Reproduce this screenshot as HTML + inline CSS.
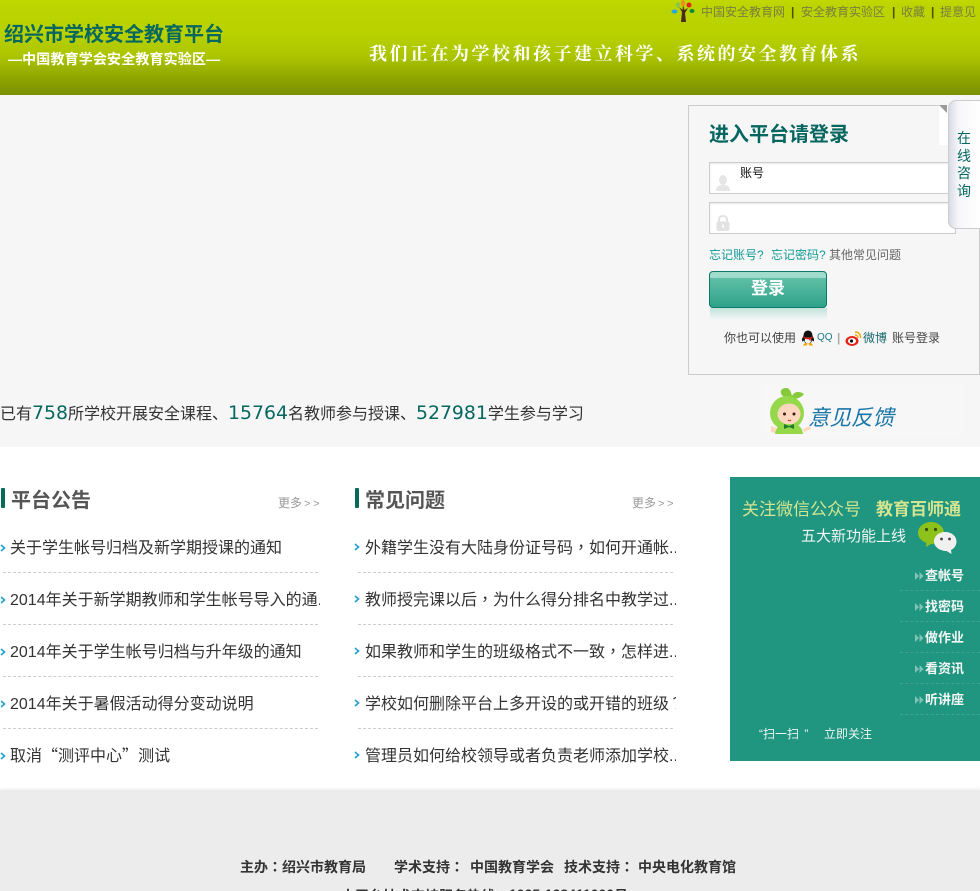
<!DOCTYPE html>
<html lang="zh">
<head>
<meta charset="utf-8">
<title>绍兴市学校安全教育平台</title>
<style>
html,body{margin:0;padding:0;width:980px;height:891px;overflow:hidden;background:#fff;font-family:"Liberation Sans","Noto Sans CJK SC",sans-serif;}
#w{position:relative;width:980px;height:891px;overflow:hidden;}
.a{position:absolute;white-space:nowrap;}
.hdr{position:absolute;left:0;top:0;width:980px;height:95px;background:linear-gradient(#c2d900 0,#bcd400 6%,#b9d200 35%,#abc400 60%,#8ba200 85%,#7a8f00 100%);}
.hero{position:absolute;left:0;top:95px;width:980px;height:352px;background:#f6f6f6;}
.foot{position:absolute;left:0;top:790px;width:980px;height:101px;background:#ececec;box-shadow:0 -1px 3px rgba(0,0,0,.08);}
.li{position:absolute;font-size:16px;line-height:24px;color:#333;white-space:nowrap;overflow:hidden;}
.dash{position:absolute;height:0;border-top:1px dashed #ccc;}
.arr{position:absolute;width:6px;height:8px;}
.ttl{position:absolute;font-size:20px;font-weight:bold;color:#555;line-height:28px;white-space:nowrap;}
.bar{position:absolute;width:4px;height:20px;background:#056a5e;border-radius:1px;}
.more{position:absolute;font-size:12px;color:#999;line-height:16px;white-space:nowrap;}
.more span{font-size:11px;letter-spacing:2.700px;margin-left:2px;line-height:0;}
.menu{position:absolute;left:925px;font-size:13px;font-weight:bold;color:#f2f7f5;line-height:16px;white-space:nowrap;}
.mdash{position:absolute;left:900px;width:80px;border-top:1px dashed #3fa48f;}
.p{font-family:"Noto Sans CJK TC",sans-serif;line-height:0;}
.q{font-family:"Noto Sans CJK SC",sans-serif;line-height:0;}
.n{font-family:"DejaVu Sans",sans-serif;font-size:18.850px;color:#05675f;line-height:0;}
.tl{position:absolute;top:4px;font-size:12px;line-height:16px;color:#777f40;white-space:nowrap;}
.sp{position:absolute;top:4px;font-size:12px;line-height:16px;color:#4a5000;font-weight:bold;}
.f{position:absolute;top:858px;font-size:14px;font-weight:bold;line-height:18px;color:#333;white-space:nowrap;}
</style>
</head>
<body>
<div id="w">

<div class="hdr"></div>
<div class="a" style="left:4px;top:20px;font-size:20px;font-weight:bold;color:#05675f;line-height:30px;">绍兴市学校安全教育平台</div>
<div class="a" style="left:8px;top:49px;font-size:14px;font-weight:bold;color:#fff;line-height:20px;letter-spacing:.15px;">—中国教育学会安全教育实验区—</div>
<div class="a" style="left:369px;top:41px;font-family:'Liberation Serif','Noto Serif CJK SC',serif;font-size:18px;color:#fff;font-weight:bold;line-height:26px;letter-spacing:2.5px;">我们正在为学校和孩子建立科学、系统的安全教育体系</div>

<svg class="a" style="left:670px;top:0;" width="26" height="24" viewBox="0 0 26 24">
<path d="M11 22 L12 12 L9 7 L12.5 10 L13 5 L14.5 10 L18 8 L15 13 L16 22 Z" fill="#4a2a1c"/>
<ellipse cx="4.500" cy="11.500" rx="3" ry="2" fill="#25a9e0"/>
<ellipse cx="8" cy="5" rx="2" ry="3" fill="#8bc34a"/>
<ellipse cx="13" cy="3" rx="2" ry="3" fill="#f08a24"/>
<ellipse cx="19" cy="5" rx="2.500" ry="2.500" fill="#e3241b"/>
<ellipse cx="22" cy="11" rx="2.500" ry="2" fill="#0a8a3c"/>
</svg>
<div class="tl" style="left:701px;">中国安全教育网</div>
<div class="sp" style="left:791px;">|</div>
<div class="tl" style="left:801px;">安全教育实验区</div>
<div class="sp" style="left:892px;">|</div>
<div class="tl" style="left:901px;">收藏</div>
<div class="sp" style="left:931px;">|</div>
<div class="tl" style="left:940px;">提意见</div>

<div class="hero"></div>

<!-- login box -->
<div class="a" style="left:688px;top:105px;width:290px;height:268px;border:1px solid #ccc;background:#f6f6f6;"></div>
<div class="a" style="left:709px;top:121px;font-size:20px;font-weight:bold;color:#05675f;line-height:28px;">进入平台请登录</div>

<div class="a" style="left:709px;top:162px;width:245px;height:30px;border:1px solid #ccc;background:#fff;box-shadow:inset 0 1px 2px #e8e8e8;"></div>
<svg class="a" style="left:715px;top:174px;" width="16" height="18" viewBox="0 0 16 18"><ellipse cx="8" cy="6" rx="4" ry="5" fill="#e6e6e6"/><path d="M1 17 C1 12 4 11 8 11 C12 11 15 12 15 17 Z" fill="#e6e6e6"/></svg>
<div class="a" style="left:740px;top:165px;font-size:12px;line-height:16px;color:#111;">账号</div>

<div class="a" style="left:709px;top:202px;width:245px;height:30px;border:1px solid #ccc;background:#fff;box-shadow:inset 0 1px 2px #e8e8e8;"></div>
<svg class="a" style="left:715px;top:214px;" width="16" height="18" viewBox="0 0 16 18"><path d="M4 8 V5.500 C4 3 6 2 8 2 C10 2 12 3 12 5.500 V8" fill="none" stroke="#e2e2e2" stroke-width="2"/><rect x="1.500" y="7.500" width="13" height="9.500" rx="2" fill="#e2e2e2"/><rect x="7.200" y="10.500" width="1.600" height="3.500" fill="#fff"/></svg>

<div class="a" style="left:709px;top:247px;font-size:12px;line-height:16px;color:#139a96;">忘记账号?</div>
<div class="a" style="left:771px;top:247px;font-size:12px;line-height:16px;color:#139a96;">忘记密码?</div>
<div class="a" style="left:829px;top:247px;font-size:12px;line-height:16px;color:#666;">其他常见问题</div>

<div class="a" style="left:709px;top:271px;width:116px;height:35px;border:1px solid #0b7a6a;border-radius:4px;background:linear-gradient(#9fdccb 0,#9fdccb 16%,#5fbea6 18%,#2fa28a 100%);"></div>
<div class="a" style="left:710px;top:308px;width:117px;height:12px;background:linear-gradient(#bfe3da,#f6f6f6);"></div>
<div class="a" style="left:751px;top:278px;font-size:17px;font-weight:bold;color:#fff;line-height:22px;">登录</div>

<div class="a" style="left:724px;top:330px;font-size:12px;line-height:16px;color:#444;">你也可以使用</div>
<svg class="a" style="left:800px;top:330px;" width="16" height="16" viewBox="0 0 16 16"><path d="M8 0.500 C11 0.500 12.500 3 12.500 6 C14 8 14.500 10.500 13.500 11.500 L12 10.500 C11.500 12 11 13 10 13.500 H6 C5 13 4.500 12 4 10.500 L2.500 11.500 C1.500 10.500 2 8 3.500 6 C3.500 3 5 0.500 8 0.500 Z" fill="#111"/><ellipse cx="8" cy="10.500" rx="3.300" ry="3" fill="#f4f4f4"/><path d="M3.500 6.500 Q8 9 12.500 6.500 L12.500 8 Q10 9.500 10.500 11.500 L9 9.500 Q6 9.500 3.500 8 Z" fill="#e3241b"/><path d="M2.500 15.500 L5 13 H7.500 L7 15.500 Z M13.500 15.500 L11 13 H8.500 L9 15.500 Z" fill="#f5a400"/></svg>
<div class="a" style="left:817px;top:331px;font-size:10px;line-height:14px;color:#1d7a8a;">QQ</div>
<div class="a" style="left:837px;top:330px;font-size:12px;line-height:16px;color:#aaa;font-weight:bold;">|</div>
<svg class="a" style="left:845px;top:330px;" width="17" height="17" viewBox="0 0 17 17"><ellipse cx="7" cy="11" rx="6.500" ry="5" fill="#e3241b"/><ellipse cx="7" cy="11" rx="4" ry="3" fill="#fff"/><circle cx="6.500" cy="11" r="1.600" fill="#111"/><path d="M10 2 C14 2 16 5 15.500 8 M10 5 C12 5 13 6.500 13 8" fill="none" stroke="#f5a400" stroke-width="1.400"/></svg>
<div class="a" style="left:863px;top:330px;font-size:12px;line-height:16px;color:#1a6a70;">微博</div>
<div class="a" style="left:892px;top:330px;font-size:12px;line-height:16px;color:#444;">账号登录</div>

<!-- consult tab -->
<div class="a" style="left:939px;top:105px;width:10px;height:40px;background:#fff;"></div>
<div class="a" style="left:939px;top:105px;width:0;height:0;border-top:8px solid #999;border-left:8px solid transparent;"></div>
<div class="a" style="left:948px;top:100px;width:32px;height:127px;border:1px solid #ccc;border-right:0;border-radius:8px 0 0 8px;background:linear-gradient(90deg,#d7dbe4 0,#f7f7fa 30%,#fff 100%);"></div>
<div class="a" style="left:957px;top:130px;width:15px;font-size:14px;line-height:17.700px;color:#05675f;white-space:normal;">在线咨询</div>

<!-- stats -->
<div class="a" style="left:0;top:402px;font-size:16px;line-height:26px;color:#333;">已有<span class="n">758</span>所学校开展安全课程、<span class="n">15764</span>名教师参与授课、<span class="n">527981</span>学生参与学习</div>

<!-- feedback -->
<div class="a" style="left:762px;top:383px;width:200px;height:55px;background:#f7f7f7;"></div>
<svg class="a" style="left:768px;top:386px;" width="46" height="50" viewBox="0 0 46 50">
<path d="M18 12 C10 8 12 2 18 2 C22 2 23 6 24 10 C26 5 32 5 36 8 C33 12 28 13 24 13 Z" fill="#86c93a"/>
<ellipse cx="19" cy="27" rx="17" ry="17" fill="#95d84a"/>
<ellipse cx="21" cy="28" rx="11.500" ry="10.500" fill="#fcd7bd"/>
<circle cx="16.500" cy="28" r="1.500" fill="#3a1c10"/><circle cx="26" cy="28" r="1.500" fill="#3a1c10"/>
<path d="M20 34 Q21.500 35.500 23 34" fill="none" stroke="#c0392b" stroke-width="1"/>
<path d="M7 48 C8 40 12 38 21 38 C30 38 34 40 35 48 Z" fill="#95d84a"/>
<path d="M16 38 L21 40 L26 38 L26 43 L21 41 L16 43 Z" fill="#1f7d2b"/>
<path d="M3 40 L8 42 L7 47 L3 46 Z M35 43 L42 40 L43 43 L36 46 Z" fill="#fcd7bd"/>
</svg>
<div class="a" style="left:808px;top:404px;font-size:21.500px;line-height:28px;font-style:italic;color:#1a76a8;">意见反馈</div>

<!-- left list -->
<div class="bar" style="left:1px;top:488px;"></div>
<div class="ttl" style="left:11px;top:487px;">平台公告</div>
<div class="more" style="left:278px;top:495px;">更多<span>&gt;&gt;</span></div>

<svg class="arr" style="left:0;top:544px;" viewBox="0 0 6 8"><path d="M1 1 L4.500 4 L1 7" fill="none" stroke="#1d9fd0" stroke-width="1.600"/></svg>
<div class="li" style="left:10px;top:537px;width:310px;">关于学生帐号归档及新学期授课的通知</div>
<div class="dash" style="left:3px;top:572px;width:315px;"></div>
<svg class="arr" style="left:0;top:596px;" viewBox="0 0 6 8"><path d="M1 1 L4.500 4 L1 7" fill="none" stroke="#1d9fd0" stroke-width="1.600"/></svg>
<div class="li" style="left:10px;top:589px;width:310px;">2014年关于新学期教师和学生帐号导入的通..</div>
<div class="dash" style="left:3px;top:624px;width:315px;"></div>
<svg class="arr" style="left:0;top:648px;" viewBox="0 0 6 8"><path d="M1 1 L4.500 4 L1 7" fill="none" stroke="#1d9fd0" stroke-width="1.600"/></svg>
<div class="li" style="left:10px;top:641px;width:310px;">2014年关于学生帐号归档与升年级的通知</div>
<div class="dash" style="left:3px;top:676px;width:315px;"></div>
<svg class="arr" style="left:0;top:700px;" viewBox="0 0 6 8"><path d="M1 1 L4.500 4 L1 7" fill="none" stroke="#1d9fd0" stroke-width="1.600"/></svg>
<div class="li" style="left:10px;top:693px;width:310px;">2014年关于暑假活动得分变动说明</div>
<div class="dash" style="left:3px;top:728px;width:315px;"></div>
<svg class="arr" style="left:0;top:752px;" viewBox="0 0 6 8"><path d="M1 1 L4.500 4 L1 7" fill="none" stroke="#1d9fd0" stroke-width="1.600"/></svg>
<div class="li" style="left:10px;top:745px;width:310px;">取消<span class="q">“</span>测评中心<span class="q">”</span>测试</div>

<!-- middle list -->
<div class="bar" style="left:355px;top:488px;"></div>
<div class="ttl" style="left:365px;top:487px;">常见问题</div>
<div class="more" style="left:632px;top:495px;">更多<span>&gt;&gt;</span></div>

<svg class="arr" style="left:354px;top:543px;" viewBox="0 0 6 8"><path d="M1 1 L4.500 4 L1 7" fill="none" stroke="#1d9fd0" stroke-width="1.600"/></svg>
<div class="li" style="left:365px;top:537px;width:311px;">外籍学生没有大陆身份证号码<span class="p" lang="zh-Hant">，</span>如何开通帐..</div>
<div class="dash" style="left:358px;top:572px;width:315px;"></div>
<svg class="arr" style="left:354px;top:595px;" viewBox="0 0 6 8"><path d="M1 1 L4.500 4 L1 7" fill="none" stroke="#1d9fd0" stroke-width="1.600"/></svg>
<div class="li" style="left:365px;top:589px;width:311px;">教师授完课以后<span class="p" lang="zh-Hant">，</span>为什么得分排名中教学过..</div>
<div class="dash" style="left:358px;top:624px;width:315px;"></div>
<svg class="arr" style="left:354px;top:647px;" viewBox="0 0 6 8"><path d="M1 1 L4.500 4 L1 7" fill="none" stroke="#1d9fd0" stroke-width="1.600"/></svg>
<div class="li" style="left:365px;top:641px;width:311px;">如果教师和学生的班级格式不一致<span class="p" lang="zh-Hant">，</span>怎样进..</div>
<div class="dash" style="left:358px;top:676px;width:315px;"></div>
<svg class="arr" style="left:354px;top:699px;" viewBox="0 0 6 8"><path d="M1 1 L4.500 4 L1 7" fill="none" stroke="#1d9fd0" stroke-width="1.600"/></svg>
<div class="li" style="left:365px;top:693px;width:311px;">学校如何删除平台上多开设的或开错的班级<span class="p" lang="zh-Hant">？</span></div>
<div class="dash" style="left:358px;top:728px;width:315px;"></div>
<svg class="arr" style="left:354px;top:751px;" viewBox="0 0 6 8"><path d="M1 1 L4.500 4 L1 7" fill="none" stroke="#1d9fd0" stroke-width="1.600"/></svg>
<div class="li" style="left:365px;top:745px;width:311px;">管理员如何给校领导或者负责老师添加学校..</div>

<!-- wechat panel -->
<div class="a" style="left:730px;top:477px;width:250px;height:284px;background:#209580;"></div>
<div class="a" style="left:742px;top:499px;font-size:17px;line-height:22px;color:#d3e591;">关注微信公众号</div>
<div class="a" style="left:876px;top:499px;font-size:17px;font-weight:bold;line-height:22px;color:#d3e591;">教育百师通</div>
<div class="a" style="left:801px;top:527px;font-size:15px;line-height:20px;color:#eef6f3;">五大新功能上线</div>
<svg class="a" style="left:917px;top:521px;" width="40" height="34" viewBox="0 0 40 34">
<path d="M14 1 C21 1 27 6 27 12 C27 18 21 23 14 23 L9 26 L9.500 22 C4.500 20 1 16.500 1 12 C1 6 7 1 14 1 Z" fill="#8cc21a"/>
<circle cx="9.500" cy="8.500" r="1.600" fill="#3a4a10"/><circle cx="18.500" cy="8.500" r="1.600" fill="#3a4a10"/>
<path d="M28 11 C34.500 11 39.500 15 39.500 20.500 C39.500 24.500 37 27.500 34 29 L34.500 33 L29.500 30 C23 30 17 26 17 20.500 C17 15 22 11 28 11 Z" fill="#f0f0f0"/>
<circle cx="24.500" cy="18" r="1.400" fill="#444"/><circle cx="32.500" cy="18" r="1.400" fill="#444"/>
</svg>

<svg class="a" style="left:915px;top:571px;" width="9" height="10" viewBox="0 0 9 10"><path d="M0 1 L4 5 L0 9 Z M4.500 1 L8.500 5 L4.500 9 Z" fill="#7fc4b6"/></svg>
<div class="menu" style="top:568px;">查帐号</div>
<div class="mdash" style="top:590px;"></div>
<svg class="a" style="left:915px;top:602px;" width="9" height="10" viewBox="0 0 9 10"><path d="M0 1 L4 5 L0 9 Z M4.500 1 L8.500 5 L4.500 9 Z" fill="#7fc4b6"/></svg>
<div class="menu" style="top:599px;">找密码</div>
<div class="mdash" style="top:621px;"></div>
<svg class="a" style="left:915px;top:633px;" width="9" height="10" viewBox="0 0 9 10"><path d="M0 1 L4 5 L0 9 Z M4.500 1 L8.500 5 L4.500 9 Z" fill="#7fc4b6"/></svg>
<div class="menu" style="top:630px;">做作业</div>
<div class="mdash" style="top:652px;"></div>
<svg class="a" style="left:915px;top:664px;" width="9" height="10" viewBox="0 0 9 10"><path d="M0 1 L4 5 L0 9 Z M4.500 1 L8.500 5 L4.500 9 Z" fill="#7fc4b6"/></svg>
<div class="menu" style="top:661px;">看资讯</div>
<div class="mdash" style="top:683px;"></div>
<svg class="a" style="left:915px;top:695px;" width="9" height="10" viewBox="0 0 9 10"><path d="M0 1 L4 5 L0 9 Z M4.500 1 L8.500 5 L4.500 9 Z" fill="#7fc4b6"/></svg>
<div class="menu" style="top:692px;">听讲座</div>
<div class="mdash" style="top:714px;"></div>

<div class="a" style="left:759px;top:726px;font-size:12px;line-height:16px;color:#eef6f3;word-spacing:2px;">“扫一扫 ”</div>
<div class="a" style="left:824px;top:726px;font-size:12px;line-height:16px;color:#eef6f3;">立即关注</div>

<!-- footer -->
<div class="foot"></div>
<div class="f" style="left:240px;">主办<span class="p" lang="zh-Hant">：</span>绍兴市教育局</div>
<div class="f" style="left:394px;">学术支持<span class="p" lang="zh-Hant">：</span></div>
<div class="f" style="left:470px;">中国教育学会</div>
<div class="f" style="left:564px;">技术支持<span class="p" lang="zh-Hant">：</span></div>
<div class="f" style="left:638px;">中央电化教育馆</div>
<div class="f" style="left:341px;top:887px;">本平台技术支持服务热线<span class="p" lang="zh-Hant">：</span><span style="position:relative;top:-2px;line-height:0;">1025-123411000</span>号</div>

</div>
</body>
</html>
